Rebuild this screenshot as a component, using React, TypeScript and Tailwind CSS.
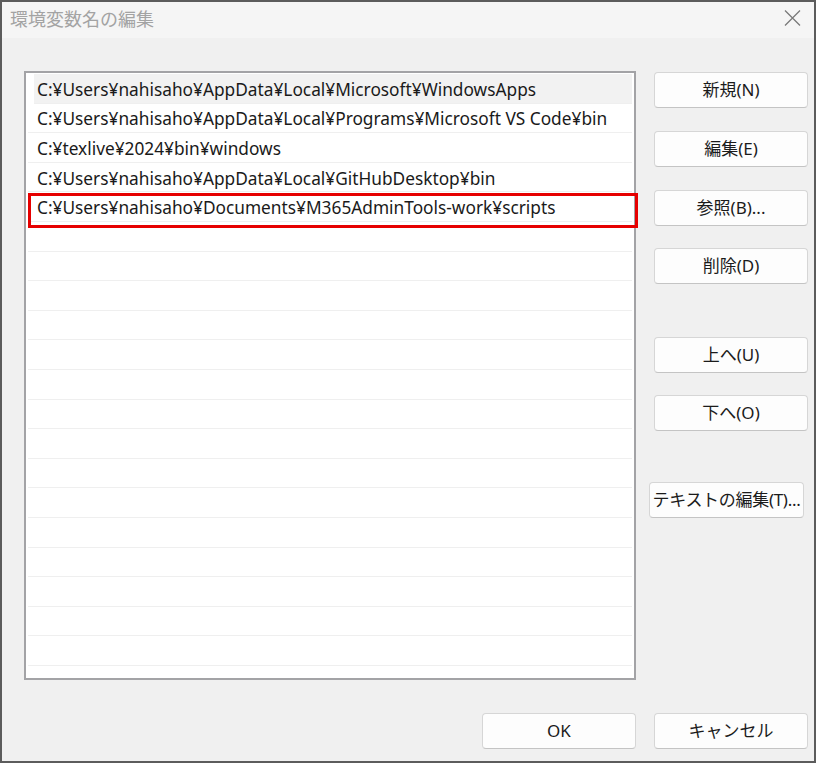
const paths = [
  "C:¥Users¥nahisaho¥AppData¥Local¥Microsoft¥WindowsApps",
  "C:¥Users¥nahisaho¥AppData¥Local¥Programs¥Microsoft VS Code¥bin",
  "C:¥texlive¥2024¥bin¥windows",
  "C:¥Users¥nahisaho¥AppData¥Local¥GitHubDesktop¥bin",
  "C:¥Users¥nahisaho¥Documents¥M365AdminTools-work¥scripts",
];

const font = "font-['Noto_Sans','Noto_Sans_CJK_JP',sans-serif]";

function DialogButton({
  label,
  className = "",
}: {
  label: string;
  className?: string;
}) {
  return (
    <button
      className={`h-[36px] w-[154px] rounded-[4px] border border-[#d6d6d6] border-b-[#c4c4c4] bg-[#fdfdfd] text-[17px] text-[#1b1b1b] whitespace-nowrap ${className}`}
    >
      {label}
    </button>
  );
}

export default function App() {
  const rows = Array.from({ length: 21 }, (_, i) => paths[i] ?? "");

  return (
    <div className={`w-[818px] h-[763px] bg-white ${font}`}>
      <div className="w-[816px] h-[763px] border-2 border-[#5c5c5c] bg-[#f0f0f0] flex flex-col">
        {/* title bar */}
        <div className="h-[36px] shrink-0 bg-[#f5f5f5] flex items-center justify-between pl-[8px] pr-[13px] pb-[4px]">
          <span className="text-[18px] text-[#a3a3a3] font-['Noto_Sans_CJK_JP',sans-serif] leading-none">
            環境変数名の編集
          </span>
          <svg width="17" height="16" viewBox="0 0 17 16" className="-mt-[1px]">
            <path d="M1 0.5 L16 15.5 M16 0.5 L1 15.5" stroke="#7a7a7a" strokeWidth="1.3" />
          </svg>
        </div>

        {/* main area */}
        <div className="flex flex-1 pt-[33px] pl-[22px]">
          <div className="relative">
            <div className="w-[612px] h-[609px] border-2 border-[#a3a3a6] bg-white pt-[1px] pl-[2px] pr-[2px] overflow-hidden">
              {rows.map((p, i) => (
                <div
                  key={i}
                  className={`h-[29.6px] flex items-center border-b border-[#efefef] ${
                    i === 0 ? "bg-[#f2f2f2] ml-[6px] pl-[3px]" : "pl-[9px]"
                  }`}
                >
                  <span className="text-[17.3px] text-[#1a1a1a] whitespace-nowrap mt-[3px]">{p}</span>
                </div>
              ))}
            </div>
            {/* highlight annotation */}
            <div className="absolute left-[4px] top-[122px] w-[610px] h-[35px] border-[3px] border-[#e60000]" />
          </div>

          <div className="flex flex-col ml-[18px] pt-[1px]">
            <DialogButton label="新規(N)" />
            <DialogButton label="編集(E)" className="mt-[23px]" />
            <DialogButton label="参照(B)..." className="mt-[23px]" />
            <DialogButton label="削除(D)" className="mt-[22px]" />
            <DialogButton label="上へ(U)" className="mt-[53px]" />
            <DialogButton label="下へ(O)" className="mt-[22px]" />
            <DialogButton label="テキストの編集(T)..." className="mt-[51px] -ml-[5px] w-[155px] tracking-[-0.3px]" />
          </div>
        </div>

        {/* footer */}
        <div className="flex justify-end gap-[18px] pr-[6px] pb-[12px] pt-[32px]">
          <DialogButton label="OK" />
          <DialogButton label="キャンセル" />
        </div>
      </div>
    </div>
  );
}
